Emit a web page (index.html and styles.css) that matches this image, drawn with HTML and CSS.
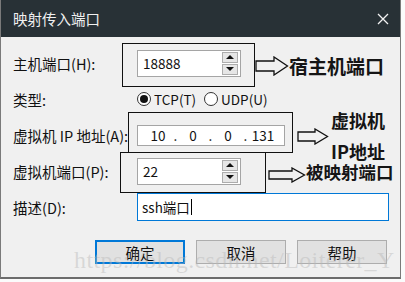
FILE: index.html
```html
<!DOCTYPE html>
<html lang="zh-CN">
<head>
  <meta charset="UTF-8">
  <title>映射传入端口</title>
  <link rel="stylesheet" href="styles.css">
</head>
<body>
  <div class="dialog">
    <div class="titlebar">
      <span class="title">映射传入端口</span>
      <svg class="close" width="12" height="12" viewBox="0 0 12 12">
        <path d="M1 1 L11 11 M11 1 L1 11" stroke="#f2f2f2" stroke-width="1.3" fill="none"/>
      </svg>
    </div>

    <div class="content">
      <div class="row">
        <span class="label">主机端口(H):</span>
        <div class="spin">
          <span class="value">18888</span>
          <div class="spin-buttons"><span class="spin-btn up"></span><span class="spin-btn down"></span></div>
        </div>
      </div>

      <div class="row">
        <span class="label">类型:</span>
        <div class="radios">
          <span class="radio-item"><span class="radio checked"></span>TCP(T)</span>
          <span class="radio-item"><span class="radio"></span>UDP(U)</span>
        </div>
      </div>

      <div class="row">
        <span class="label">虚拟机 IP 地址(A):</span>
        <div class="ip">
          <span class="seg">10</span><span class="dot">.</span>
          <span class="seg">0</span><span class="dot">.</span>
          <span class="seg">0</span><span class="dot">.</span>
          <span class="seg">131</span>
        </div>
      </div>

      <div class="row">
        <span class="label">虚拟机端口(P):</span>
        <div class="spin">
          <span class="value">22</span>
          <div class="spin-buttons"><span class="spin-btn up"></span><span class="spin-btn down"></span></div>
        </div>
      </div>

      <div class="row">
        <span class="label">描述(D):</span>
        <div class="desc"><span class="value">ssh端口</span><span class="caret"></span></div>
      </div>

      <div class="buttons">
        <button class="btn default">确定</button>
        <button class="btn">取消</button>
        <button class="btn">帮助</button>
      </div>
    </div>

    <!-- 标注 -->
    <div class="mark mark-host"></div>
    <div class="mark mark-ip"></div>
    <div class="mark mark-port"></div>

    <svg class="arrow arrow-host" width="34" height="20" viewBox="0 0 34 20">
      <path d="M1 5 H19 V1 L32.5 10 L19 19 V15 H1 Z" stroke="#111" stroke-width="1.3" fill="none"/>
    </svg>
    <svg class="arrow arrow-ip" width="32" height="17" viewBox="0 0 32 17">
      <path d="M1 4 H18 V1 L30.5 8.5 L18 16 V13 H1 Z" stroke="#111" stroke-width="1.3" fill="none"/>
    </svg>
    <svg class="arrow arrow-port" width="38" height="16" viewBox="0 0 38 16">
      <path d="M1 4 H24 V1 L36.5 8 L24 15 V12 H1 Z" stroke="#111" stroke-width="1.3" fill="none"/>
    </svg>

    <div class="note note-host">宿主机端口</div>
    <div class="note note-ip">虚拟机<br>IP地址</div>
    <div class="note note-port">被映射端口</div>

    <div class="watermark">https://blog.csdn.net/Loiterer_Y</div>
  </div>
</body>
</html>
```

FILE: styles.css
```css
* {
  margin: 0;
  padding: 0;
  box-sizing: border-box;
}

body {
  width: 405px;
  height: 282px;
  overflow: hidden;
  background: #fbfbfb;
  font-family: "Noto Sans CJK SC", "Noto Sans", sans-serif;
  color: #111;
}

.dialog {
  position: relative;
  width: 401px;
  height: 279px;
  background: #f0f0f0;
  border: 1px solid #7a7a7a;
  border-top: none;
  border-bottom: 2px solid #6c6c6c;
}

/* 标题栏 */
.titlebar {
  height: 37px;
  background: #283136;
  color: #f0f0f0;
  display: flex;
  align-items: center;
  justify-content: space-between;
  padding: 0 11px 0 12px;
  font-size: 14.5px;
}

.content {
  padding: 8px 0 0 12px;
}

.row {
  height: 36px;
  display: flex;
  align-items: center;
}

.label {
  width: 124px;
  font-size: 14.5px;
  white-space: nowrap;
}

.value {
  font-size: 13.5px;
}

/* 数字框 */
.spin {
  width: 104px;
  height: 27px;
  background: #fff;
  border: 1px solid #a5a5a5;
  display: flex;
  align-items: center;
  justify-content: space-between;
  padding: 1px 2px 1px 5px;
}

.spin-buttons {
  width: 16px;
  height: 100%;
  display: flex;
  flex-direction: column;
  gap: 1px;
}

.spin-btn {
  flex: 1;
  background: #e6e6e6;
  border: 1px solid #adadad;
  display: flex;
  align-items: center;
  justify-content: center;
}

.spin-btn::before {
  content: "";
  border-left: 4px solid transparent;
  border-right: 4px solid transparent;
}

.up::before {
  border-bottom: 4px solid #111;
}

.down::before {
  border-top: 4px solid #111;
}

/* 单选 */
.radios {
  display: flex;
  align-items: center;
  font-size: 13.5px;
}

.radio-item {
  display: flex;
  align-items: center;
  gap: 3px;
  margin-right: 8px;
}

.radio {
  width: 14px;
  height: 14px;
  border: 1px solid #333;
  border-radius: 50%;
  background: #fff;
  display: flex;
  align-items: center;
  justify-content: center;
}

.radio.checked::after {
  content: "";
  width: 8px;
  height: 8px;
  border-radius: 50%;
  background: #111;
}

/* IP 地址 */
.ip {
  width: 148px;
  height: 21px;
  background: #fff;
  border: 1px solid #a5a5a5;
  display: flex;
  align-items: center;
  padding-left: 8px;
  font-size: 13.5px;
}

.seg {
  width: 24px;
  text-align: center;
}

.dot {
  width: 11px;
  text-align: center;
}

/* 描述 */
.desc {
  width: 252px;
  height: 28px;
  background: #fff;
  border: 1px solid #0078d7;
  display: flex;
  align-items: center;
  padding-left: 4px;
}

.caret {
  width: 1px;
  height: 16px;
  background: #000;
  margin-left: 1px;
}

/* 按钮 */
.buttons {
  display: flex;
  gap: 11px;
  margin-top: 15px;
  padding-left: 82px;
}

.btn {
  width: 90px;
  height: 24px;
  background: #e1e1e1;
  border: 1px solid #adadad;
  font-family: inherit;
  font-size: 14.5px;
  color: #111;
}

.btn.default {
  border: 2px solid #0078d7;
}

/* 标注 */
.mark {
  position: absolute;
  border: 1.5px solid #111;
}

.mark-host {
  left: 121px;
  top: 43px;
  width: 133px;
  height: 44px;
}

.mark-ip {
  left: 127px;
  top: 112px;
  width: 165px;
  height: 41px;
}

.mark-port {
  left: 119px;
  top: 152px;
  width: 146px;
  height: 41px;
}

.arrow {
  position: absolute;
}

.arrow-host {
  left: 254px;
  top: 56px;
}

.arrow-ip {
  left: 296px;
  top: 128px;
}

.arrow-port {
  left: 267px;
  top: 167px;
}

.note {
  position: absolute;
  font-weight: 700;
  color: #151515;
  line-height: 1;
}

.note-host {
  left: 288px;
  top: 56px;
  font-size: 19px;
}

.note-ip {
  left: 330px;
  top: 105px;
  font-size: 18px;
  line-height: 31px;
  text-align: center;
}

.note-port {
  left: 305px;
  top: 163px;
  font-size: 17.5px;
}

.watermark {
  position: absolute;
  left: 73px;
  top: 247px;
  font-family: "Liberation Serif", serif;
  font-size: 24px;
  letter-spacing: 0.4px;
  color: rgba(185, 185, 185, 0.45);
  white-space: nowrap;
  pointer-events: none;
}
```
